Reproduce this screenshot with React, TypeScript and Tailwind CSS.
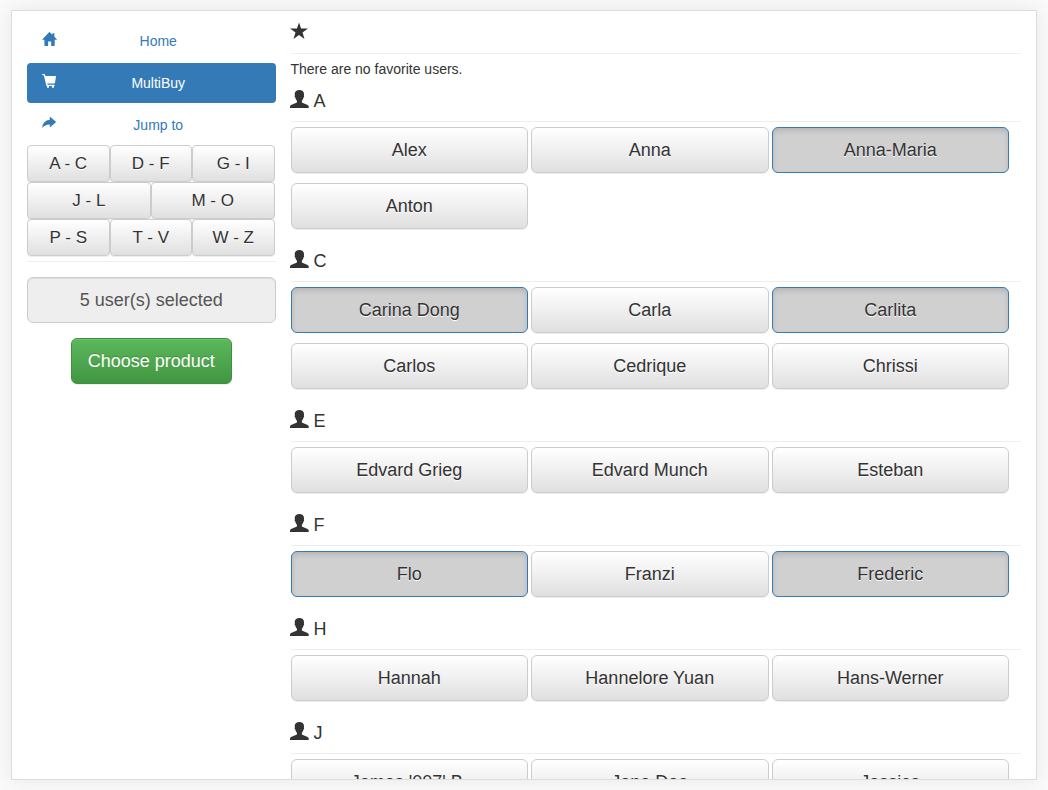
import { useState } from 'react';
import type { ReactNode } from 'react';
import clsx from 'clsx';

const groups = [
  { letter: 'A', names: ['Alex', 'Anna', 'Anna-Maria', 'Anton'] },
  { letter: 'C', names: ['Carina Dong', 'Carla', 'Carlita', 'Carlos', 'Cedrique', 'Chrissi'] },
  { letter: 'E', names: ['Edvard Grieg', 'Edvard Munch', 'Esteban'] },
  { letter: 'F', names: ['Flo', 'Franzi', 'Frederic'] },
  { letter: 'H', names: ['Hannah', 'Hannelore Yuan', 'Hans-Werner'] },
  { letter: 'J', names: ["James '007' B.", 'Jane Doe', 'Jessica'] },
];

const ranges = [
  { label: 'A - C', target: 'A', wide: false },
  { label: 'D - F', target: 'E', wide: false },
  { label: 'G - I', target: 'H', wide: false },
  { label: 'J - L', target: 'J', wide: true },
  { label: 'M - O', target: 'J', wide: true },
  { label: 'P - S', target: 'J', wide: false },
  { label: 'T - V', target: 'J', wide: false },
  { label: 'W - Z', target: 'J', wide: false },
];

const raised =
  'border border-[#ccc] bg-linear-to-b from-white to-[#e0e0e0] text-[#333] [text-shadow:0_1px_0_#fff] shadow-[inset_0_1px_0_rgba(255,255,255,0.15),0_1px_1px_rgba(0,0,0,0.075)]';

function HomeIcon() {
  return (
    <svg viewBox="0 0 15 15" className="size-[15px]" fill="currentColor" aria-hidden="true">
      <path d="M7.1.2Q7.5-.2 7.9.2L10.4 2.7V1.3H12.4V4.7L15 7.4Q15.1 7.8 14.7 7.8H12.7V13.3Q12.7 14 12 14H9.2V9.4H6.1V14H3.1Q2.4 14 2.4 13.3V7.8H.4Q0 7.8.2 7.4Z" />
    </svg>
  );
}

function CartIcon() {
  return (
    <svg viewBox="0 0 15 15" className="size-[15px]" fill="currentColor" aria-hidden="true">
      <path d="M.7 0H2.4Q2.8 0 2.9.4L3.4 2H13.5Q14.1 2 14 2.6L13 8.8Q12.9 9.5 12.2 9.5H5.3L5.6 10.8H12.1Q12.7 10.8 12.7 11.4 12.7 12 12.1 12H12V13Q12 13.9 11 13.9 10 13.9 10 13V12H7V13Q7 13.9 6 13.9 5 13.9 5 13V12Q4.5 12 4.3 11.4L1.8 1.2H.7Q.1 1.2.1.6.1 0 .7 0Z" />
    </svg>
  );
}

function ShareIcon() {
  return (
    <svg viewBox="0 0 15 15" className="size-[15px]" fill="currentColor" aria-hidden="true">
      <path d="M7.8.6 14.2 6 7.8 11.4V8.5Q3.1 8.3.2 12 .8 4.5 7.8 3.8Z" />
    </svg>
  );
}

function StarIcon() {
  return (
    <svg viewBox="1 1 18 18" className="size-[18px] overflow-visible" fill="currentColor" aria-hidden="true">
      <path d="M9 .4 11.1 6.4H18L12.5 10.4 14.5 17 9 13 3.5 17 5.5 10.4 0 6.4H6.9Z" />
    </svg>
  );
}

function UserIcon() {
  return (
    <svg viewBox="1 1 19 18" className="h-[18px] w-[19px] overflow-visible" fill="currentColor" aria-hidden="true">
      <path d="M9.4 0C12 0 14 1.3 14 3.9 14 4.7 13.9 5.1 13.9 5.5 14.4 5.7 14.1 7.3 13.5 7.6 13.2 9.2 12.4 10.2 11.8 10.9V12.1Q11.9 12.6 12.4 12.8L17.6 15Q18.7 15.5 18.7 16.6V18H0V16.6Q0 15.5 1.1 15L6.4 12.8Q6.9 12.6 7 12.1V10.9C6.4 10.2 5.6 9.2 5.3 7.6 4.7 7.3 4.4 5.7 4.9 5.5 4.9 5.1 4.7 4.7 4.7 3.9 4.7 1.3 6.8 0 9.4 0Z" />
    </svg>
  );
}

function NavItem({ href, icon, label, active }: { href: string; icon: ReactNode; label: string; active?: boolean }) {
  return (
    <li>
      <a
        href={href}
        aria-current={active ? 'page' : undefined}
        className={clsx('flex items-start rounded-[4px] px-[15px] py-[10px]', active ? 'bg-[#337ab7] text-white' : 'text-[#337ab7]')}
      >
        <span className="w-[14px] pt-px">{icon}</span>
        <span className="flex-1 text-center">{label}</span>
      </a>
    </li>
  );
}

function SectionHeading({ children, id }: { children: ReactNode; id?: string }) {
  return (
    <h3 id={id} className="mt-3 mb-[5px] flex h-[31px] items-start gap-1 border-b border-[#eee] text-[18px] leading-5">
      {children}
    </h3>
  );
}

export default function App() {
  const [selected, setSelected] = useState<string[]>(['Anna-Maria', 'Carina Dong', 'Carlita', 'Flo', 'Frederic']);

  const toggle = (name: string) =>
    setSelected((current) => (current.includes(name) ? current.filter((n) => n !== name) : [...current, name]));

  return (
    <div className="h-screen bg-[#fafafa] px-[11px] py-[10px] font-['Liberation_Sans',Arial,sans-serif] text-[14px] leading-5 text-[#333]">
      <div className="flex h-full overflow-hidden border border-[#ddd] bg-white px-[15px] shadow-[0_0_20px_rgba(0,0,0,0.08)]">
        <aside className="w-1/4 shrink-0 pt-[10px]">
          <nav aria-label="Main">
            <ul className="flex flex-col gap-[2px]">
              <NavItem href="#home" icon={<HomeIcon />} label="Home" />
              <NavItem href="#multibuy" icon={<CartIcon />} label="MultiBuy" active />
              <NavItem href="#jump" icon={<ShareIcon />} label="Jump to" />
            </ul>
            <div className="grid grid-cols-6 pr-px text-[17px]">
              {ranges.map((range) => (
                <a
                  key={range.label}
                  href={`#group-${range.target}`}
                  className={clsx('flex h-[37px] items-center justify-center rounded-[4px]', raised, range.wide ? 'col-span-3' : 'col-span-2')}
                >
                  {range.label}
                </a>
              ))}
            </div>
          </nav>
          <hr className="mt-[5px] mb-[15px] border-[#eee]" />
          <input
            readOnly
            aria-label="Selected users"
            value={`${selected.length} user(s) selected`}
            className="block h-[46px] w-full rounded-[6px] border border-[#ccc] bg-[#eee] px-4 text-center text-[18px] text-[#555] shadow-[inset_0_1px_1px_rgba(0,0,0,0.075)]"
          />
          <div className="mt-[15px] text-center">
            <button
              type="button"
              className="h-[46px] rounded-[6px] border border-[#3e8f3e] bg-linear-to-b from-[#5cb85c] to-[#419641] px-4 text-[18px] text-white shadow-[inset_0_1px_0_rgba(255,255,255,0.15),0_1px_1px_rgba(0,0,0,0.075)] [text-shadow:0_-1px_0_rgba(0,0,0,0.2)]"
            >
              Choose product
            </button>
          </div>
        </aside>
        <main className="min-w-0 flex-1 overflow-y-auto pl-[15px] [scrollbar-width:none]">
          <SectionHeading>
            <StarIcon />
          </SectionHeading>
          <p>There are no favorite users.</p>
          {groups.map((group) => (
            <section key={group.letter}>
              <SectionHeading id={`group-${group.letter}`}>
                <UserIcon />
                <span>{group.letter}</span>
              </SectionHeading>
              <div className="mr-3 grid grid-cols-3 gap-x-[3px] gap-y-[10px] pb-[10px]">
                {group.names.map((name) => {
                  const on = selected.includes(name);
                  return (
                    <button
                      key={name}
                      type="button"
                      aria-pressed={on}
                      onClick={() => toggle(name)}
                      className={clsx(
                        'h-[46px] rounded-[6px] px-4 text-[18px]',
                        on
                          ? 'border border-[#337ab7] bg-[#d0d0d0] text-[#333] shadow-[inset_0_3px_5px_rgba(0,0,0,0.125)] [text-shadow:0_1px_0_#fff]'
                          : raised,
                      )}
                    >
                      {name}
                    </button>
                  );
                })}
              </div>
            </section>
          ))}
        </main>
      </div>
    </div>
  );
}
